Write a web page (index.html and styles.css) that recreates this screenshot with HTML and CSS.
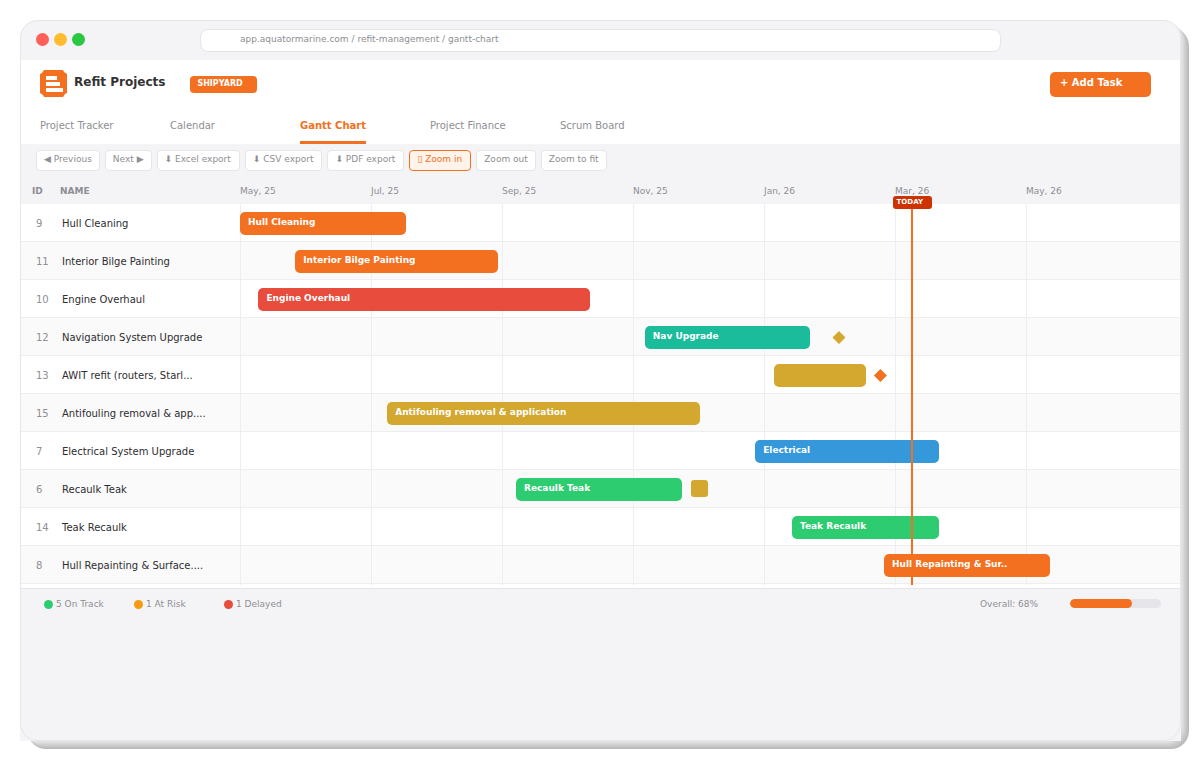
FILE: index.html
```html
<!DOCTYPE html>
<html lang="en">
<head>
    <meta charset="UTF-8">
    <meta name="viewport" content="width=device-width, initial-scale=1.0">
    <title>Refit Projects - Gantt Chart</title>
    <link rel="stylesheet" href="styles.css">
</head>
<body>
    <div class="window">
        <div class="titlebar">
            <div class="dots">
                <span class="dot red"></span>
                <span class="dot yellow"></span>
                <span class="dot green"></span>
            </div>
            <input class="address" type="text" aria-label="Address" value="app.aquatormarine.com / refit-management / gantt-chart" readonly>
        </div>

        <header class="header">
            <svg class="logo" width="27" height="27" viewBox="0 0 27 27" aria-hidden="true">
                <path d="M4 0H23L24 2L27 4V23L25 24L23 27H4L3 25L0 23V4L2 3Z" fill="#f37021"/>
                <path d="M6 6H17V10H6ZM6 12H20V16H6ZM6 18H23V22H6Z" fill="#fff"/>
            </svg>
            <h1>Refit Projects</h1>
            <span class="badge">SHIPYARD</span>
            <button class="add-task" type="button">+ Add Task</button>
        </header>

        <nav class="tabs">
            <a href="#tracker">Project Tracker</a>
            <a href="#calendar">Calendar</a>
            <a href="#gantt" class="active">Gantt Chart</a>
            <a href="#finance">Project Finance</a>
            <a href="#scrum">Scrum Board</a>
        </nav>

        <div class="toolbar">
            <button type="button">◀ Previous</button>
            <button type="button">Next ▶</button>
            <button type="button" class="with-icon">⬇ Excel export</button>
            <button type="button" class="with-icon">⬇ CSV export</button>
            <button type="button" class="with-icon">⬇ PDF export</button>
            <button type="button" class="with-icon active">▯ Zoom in</button>
            <button type="button">Zoom out</button>
            <button type="button">Zoom to fit</button>
        </div>

        <div class="gantt">
            <div class="gridlines" aria-hidden="true">
                <i></i><i></i><i></i><i></i><i></i><i></i><i></i>
            </div>
            <table>
                <thead>
                    <tr>
                        <th class="col-id">ID</th>
                        <th class="col-name">NAME</th>
                        <th class="col-time">
                            <div class="months">
                                <span>May, 25</span>
                                <span>Jul, 25</span>
                                <span>Sep, 25</span>
                                <span>Nov, 25</span>
                                <span>Jan, 26</span>
                                <span>Mar, 26</span>
                                <span>May, 26</span>
                            </div>
                        </th>
                    </tr>
                </thead>
                <tbody>
                    <tr>
                        <td class="id">9</td>
                        <td class="name">Hull Cleaning</td>
                        <td class="time"><div class="track"><div class="bar orange" style="--start: 0; --span: 9"><span>Hull Cleaning</span></div></div></td>
                    </tr>
                    <tr>
                        <td class="id">11</td>
                        <td class="name">Interior Bilge Painting</td>
                        <td class="time"><div class="track"><div class="bar orange" style="--start: 3; --span: 11"><span>Interior Bilge Painting</span></div></div></td>
                    </tr>
                    <tr>
                        <td class="id">10</td>
                        <td class="name">Engine Overhaul</td>
                        <td class="time"><div class="track"><div class="bar red" style="--start: 1; --span: 18"><span>Engine Overhaul</span></div></div></td>
                    </tr>
                    <tr>
                        <td class="id">12</td>
                        <td class="name">Navigation System Upgrade</td>
                        <td class="time"><div class="track"><div class="bar teal" style="--start: 22; --span: 9"><span>Nav Upgrade</span></div><div class="milestone gold" style="--start: 32.2"></div></div></td>
                    </tr>
                    <tr>
                        <td class="id">13</td>
                        <td class="name">AWIT refit (routers, Starl...</td>
                        <td class="time"><div class="track"><div class="bar gold" style="--start: 29; --span: 5"></div><div class="milestone orange" style="--start: 34.45"></div></div></td>
                    </tr>
                    <tr>
                        <td class="id">15</td>
                        <td class="name">Antifouling removal &amp; app....</td>
                        <td class="time"><div class="track"><div class="bar gold" style="--start: 8; --span: 17"><span>Antifouling removal &amp; application</span></div></div></td>
                    </tr>
                    <tr>
                        <td class="id">7</td>
                        <td class="name">Electrical System Upgrade</td>
                        <td class="time"><div class="track"><div class="bar blue" style="--start: 28; --span: 10"><span>Electrical</span></div></div></td>
                    </tr>
                    <tr>
                        <td class="id">6</td>
                        <td class="name">Recaulk Teak</td>
                        <td class="time"><div class="track"><div class="bar green" style="--start: 15; --span: 9"><span>Recaulk Teak</span></div><div class="chip gold" style="--start: 24.5"></div></div></td>
                    </tr>
                    <tr>
                        <td class="id">14</td>
                        <td class="name">Teak Recaulk</td>
                        <td class="time"><div class="track"><div class="bar green" style="--start: 30; --span: 8"><span>Teak Recaulk</span></div></div></td>
                    </tr>
                    <tr>
                        <td class="id">8</td>
                        <td class="name">Hull Repainting &amp; Surface....</td>
                        <td class="time"><div class="track"><div class="bar orange" style="--start: 35; --span: 9"><span>Hull Repainting &amp; Sur..</span></div></div></td>
                    </tr>
                </tbody>
            </table>
            <div class="today-layer">
                <div class="today" style="--start: 36.5"><span>TODAY</span></div>
            </div>
        </div>

        <footer class="footer">
            <span class="status"><i class="green"></i>5 On Track</span>
            <span class="status"><i class="amber"></i>1 At Risk</span>
            <span class="status"><i class="red"></i>1 Delayed</span>
            <span class="overall">Overall: 68%</span>
            <div class="progress"><div class="progress-fill" style="width: 68%"></div></div>
        </footer>
    </div>
</body>
</html>
```
FILE: styles.css
```css
* {
    box-sizing: border-box;
}
body {
    margin: 0;
    padding: 20px 19px 19px 20px;
    min-height: 100vh;
    display: flex;
    background-color: #fff;
    color: #2d2d30;
    font-family: 'DejaVu Sans', sans-serif;
    font-size: 10px;
}
button, input {
    font-family: inherit;
}
.window {
    position: relative;
    flex: 1;
    min-width: 0;
    display: flex;
    flex-direction: column;
    background-color: #fff;
    border-radius: 18px 18px 0 0;
}
/* stepped side, one shade per pixel */
.window::before {
    content: "";
    position: absolute;
    inset: 0;
    z-index: -1;
    border-radius: 18px;
    box-shadow: 1px 1px 0 #e4e4e4, 2px 2px 0 #dedede, 3px 3px 0 #d8d8d8,
        4px 4px 0 #d2d2d2, 5px 5px 0 #cccccc, 6px 6px 0 #c6c6c6,
        7px 7px 0 #c0c0c0, 8px 8px 0 #bababa;
}
.window::after {
    content: "";
    position: absolute;
    inset: 0;
    border: 1px solid #e5e5ea;
    border-radius: 18px;
    pointer-events: none;
}

/* colours */
.orange { background-color: #f37021; }
.red { background-color: #e74c3c; }
.teal { background-color: #1abc9c; }
.gold { background-color: #d4a72f; }
.blue { background-color: #3498db; }
.green { background-color: #2ecc71; }
.amber { background-color: #f39c12; }

.titlebar {
    height: 40px;
    padding: 0 180px 0 16px;
    display: flex;
    align-items: center;
    background-color: #f4f4f7;
    border-radius: 18px 18px 0 0;
}
.dots {
    width: 164px;
    padding-bottom: 2px;
    display: flex;
    gap: 5px;
}
.dot {
    width: 13px;
    height: 13px;
    border-radius: 50%;
}
.dot.red { background-color: #ff5f57; }
.dot.yellow { background-color: #febc2e; }
.dot.green { background-color: #28c840; }
.address {
    flex: 1;
    min-width: 0;
    height: 23px;
    padding: 0 39px 3px;
    border: 1px solid #e5e5ea;
    border-radius: 8px;
    background-color: #fff;
    color: #8e8e93;
    font-size: 9px;
}

.header {
    height: 48px;
    padding: 0 30px 0 20px;
    display: flex;
    align-items: center;
}
.logo {
    margin-bottom: 2px;
}
h1 {
    margin: 0 0 4px 7px;
    color: #333;
    font-size: 12px;
    line-height: 16px;
}
.badge {
    height: 17px;
    margin-left: 25px;
    padding: 0 14px 0 7px;
    border-radius: 4px;
    background-color: #f37021;
    color: #fff;
    font-size: 8px;
    font-weight: bold;
    line-height: 15px;
}
.add-task {
    width: 101px;
    height: 25px;
    margin-left: auto;
    padding: 0 10px 4px;
    border: none;
    border-radius: 5px;
    background-color: #f37021;
    color: #fff;
    font-size: 10px;
    font-weight: bold;
    text-align: left;
    cursor: pointer;
}

.tabs {
    height: 36px;
    padding-left: 20px;
    display: grid;
    grid-template-columns: repeat(5, 130px);
    justify-items: start;
}
.tabs a {
    padding-top: 9px;
    color: #8e8e93;
    line-height: 18px;
    text-decoration: none;
}
.tabs a.active {
    border-bottom: 3px solid #f37021;
    color: #f37021;
    font-weight: bold;
}

.toolbar {
    height: 33px;
    padding: 6px 16px;
    display: flex;
    gap: 5px;
    background-color: #f4f4f7;
}
.toolbar button {
    height: 21px;
    padding: 0 7px 4px;
    border: 1px solid #e5e5ea;
    border-radius: 4px;
    background-color: #fff;
    color: #8e8e93;
    font-size: 9px;
    white-space: nowrap;
    cursor: pointer;
}
.toolbar button.with-icon {
    padding-right: 8px;
}
.toolbar button.active {
    border-color: #f37021;
    background-color: #fff3eb;
    color: #f37021;
}

.gantt {
    position: relative;
    padding-bottom: 4px;
}
table {
    width: 100%;
    table-layout: fixed;
    border-collapse: separate;
    border-spacing: 0;
}
th {
    height: 27px;
    padding: 0 0 0 12px;
    background-color: #f4f4f7;
    color: #8e8e93;
    font-size: 9px;
    line-height: 12px;
    text-align: left;
}
.col-id {
    width: 40px;
}
.col-name {
    width: 180px;
    padding-left: 0;
}
.col-time {
    padding: 0 21px 0 0;
    font-weight: normal;
}
.months, .gridlines {
    display: grid;
    grid-template-columns: repeat(7, 14.24%);
}
td {
    height: 38px;
    padding: 2px 0 0;
    border-bottom: 1px solid #eeeef0;
    white-space: nowrap;
}
tbody tr:nth-child(even) {
    background-color: #fafafa;
}
td.id {
    padding-left: 16px;
    color: #8e8e93;
}
td.name {
    padding-left: 2px;
}
td.time {
    padding: 0 21px 0 0;
}
.track {
    position: relative;
    height: 37px;
}
/* the timeline is 50 steps wide */
.bar, .milestone, .chip, .today {
    position: absolute;
    left: calc(var(--start) * 2%);
}
.bar {
    top: 8px;
    width: calc(var(--span) * 2%);
    height: 23px;
    padding: 0 8px;
    border-radius: 5px;
    color: #fff;
    font-size: 9px;
    font-weight: bold;
    line-height: 20px;
}
/* bar text stays above the today line */
.bar span {
    position: relative;
    z-index: 3;
}
.milestone {
    top: 13px;
    width: 13px;
    height: 13px;
    clip-path: polygon(50% 0, 100% 50%, 50% 100%, 0 50%);
}
.chip {
    top: 10px;
    width: 17px;
    height: 17px;
    border-radius: 3px;
}
.gridlines, .today-layer {
    position: absolute;
    top: 27px;
    right: 21px;
    bottom: 3px;
    left: 220px;
    pointer-events: none;
}
.gridlines i {
    border-left: 1px solid #eeeef0;
}
.today-layer {
    z-index: 2;
}
.today {
    top: 0;
    bottom: 0;
    width: 2px;
    margin-left: -1px;
    background-color: #f37021;
}
.today span {
    position: absolute;
    top: -8px;
    left: -18px;
    width: 39px;
    height: 13px;
    padding-left: 4px;
    border-radius: 3px;
    background-color: #cc3300;
    color: #fff;
    font-size: 7px;
    font-weight: bold;
    line-height: 12px;
}

.footer {
    flex: 1;
    padding: 8px 20px 8px 24px;
    display: flex;
    align-items: flex-start;
    border-top: 1px solid #e5e5ea;
    background-color: #f4f4f7;
    color: #8e8e93;
    font-size: 9px;
    line-height: 14px;
}
.status {
    width: 90px;
    display: flex;
    align-items: center;
    gap: 3px;
}
.status i {
    width: 9px;
    height: 9px;
    border-radius: 50%;
}
.overall {
    width: 90px;
    margin-left: auto;
}
.progress {
    width: 91px;
    height: 9px;
    margin-top: 2px;
    border-radius: 5px;
    background-color: #e5e5ea;
    overflow: hidden;
}
.progress-fill {
    height: 100%;
    border-radius: 5px;
    background-color: #f37021;
}
```
